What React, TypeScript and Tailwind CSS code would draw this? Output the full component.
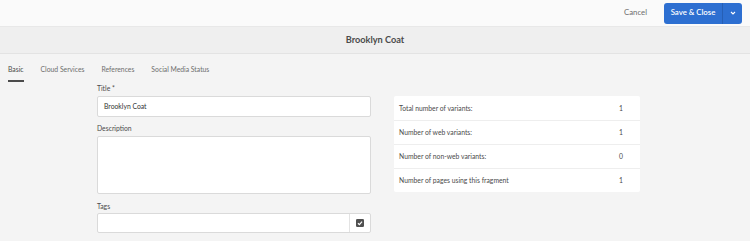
const stats = [
  { label: "Total number of variants:", value: "1" },
  { label: "Number of web variants:", value: "1" },
  { label: "Number of non-web variants:", value: "0" },
  { label: "Number of pages using this fragment", value: "1" },
]

const tabs = ["Basic", "Cloud Services", "References", "Social Media Status"]

export default function App() {
  return (
    <div className="h-[241px] w-[750px] overflow-hidden bg-[#f4f4f4] font-['Lato',sans-serif] text-[#4b4b4b]">
      <header className="flex h-[27px] items-center justify-end border-b border-[#e8e8e8] bg-[#fafafa] pr-2">
        <button className="mr-[17px] text-[7.8px] text-[#6e6e6e]">Cancel</button>
        <div className="flex h-[21px] w-[78px] overflow-hidden rounded-[3px] bg-[#2d6fd1] text-white">
          <span className="flex flex-1 items-center justify-center text-[7.8px] font-semibold">Save &amp; Close</span>
          <span className="flex w-[20px] items-center justify-center border-l border-[#265fb5]">
            <svg width="6" height="4" viewBox="0 0 6 4" fill="none" stroke="white" strokeWidth="1.1">
              <path d="M1 1l2 2 2-2" />
            </svg>
          </span>
        </div>
      </header>

      <div className="flex h-[27px] items-center justify-center border-b border-[#e3e3e3] bg-[#efefef]">
        <h1 className="text-[9.2px] font-bold text-[#4b4b4b]">Brooklyn Coat</h1>
      </div>

      <nav className="flex h-[28px] gap-[17px] pl-2 pt-[10px] text-[6.8px]">
        {tabs.map((tab, i) => (
          <div key={tab} className="flex flex-col">
            <span className={`leading-[10px] ${i === 0 ? "text-[#4b4b4b]" : "text-[#6e6e6e]"}`}>{tab}</span>
            {i === 0 && <span className="mt-[6px] h-[2px] w-full bg-[#4b4b4b]" />}
          </div>
        ))}
      </nav>

      <div className="flex items-start gap-[23px] pl-[97px]">
        <div className="w-[274px] text-[6.8px]">
          <label className="block leading-[12px]">Title *</label>
          <div className="mt-[2px] flex h-[21px] items-center rounded-[2px] border border-[#dadada] bg-white pl-[6px] text-[#333]">
            Brooklyn Coat
          </div>
          <label className="mt-[5px] block leading-[12px]">Description</label>
          <div className="mt-[2px] h-[58px] rounded-[2px] border border-[#dadada] bg-white" />
          <label className="mt-[6px] block leading-[12px]">Tags</label>
          <div className="mt-[1px] flex h-[20px] rounded-[2px] border border-[#dadada] bg-white">
            <div className="flex-1" />
            <div className="flex w-[21px] items-center justify-center border-l border-[#e3e3e3]">
              <svg width="8" height="8" viewBox="0 0 9 9">
                <rect width="9" height="9" rx="1.5" fill="#505050" />
                <path d="M2.2 4.8l1.6 1.5 3-3.3" fill="none" stroke="white" strokeWidth="1.3" />
              </svg>
            </div>
          </div>
        </div>

        <div className="mt-[14px] w-[246px] overflow-hidden rounded-[2px] bg-white text-[6.8px]">
          {stats.map((s, i) => (
            <div
              key={s.label}
              className={`flex h-[24px] items-center pl-[5px] ${i > 0 ? "border-t border-[#eeeeee]" : ""}`}
            >
              <span className="flex-1">{s.label}</span>
              <span className="w-[21px]">{s.value}</span>
            </div>
          ))}
        </div>
      </div>
    </div>
  )
}
